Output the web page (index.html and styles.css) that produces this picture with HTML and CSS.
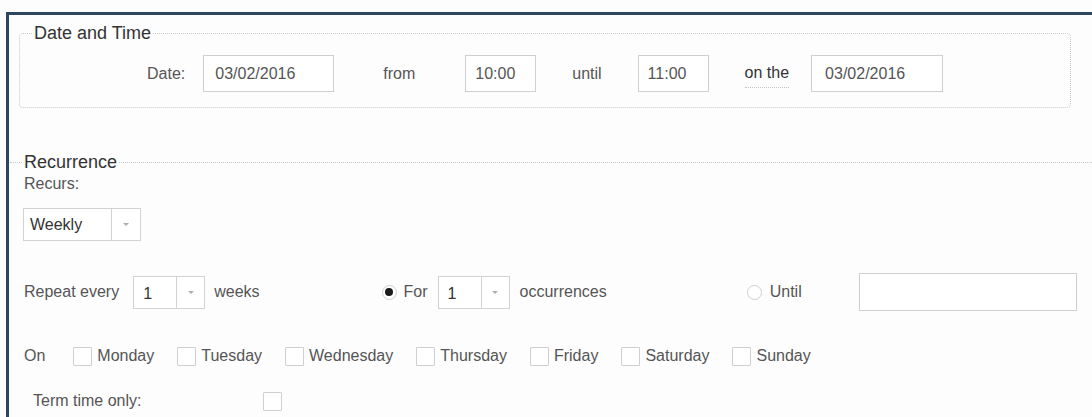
FILE: index.html
```html
<!DOCTYPE html>
<html lang="en">
<head>
<meta charset="utf-8">
<title>Event schedule</title>
<link rel="stylesheet" href="styles.css">
</head>
<body>
<div class="panel">
  <fieldset class="group">
    <legend>Date and Time</legend>
    <div class="date-row">
      <span class="lbl">Date:</span>
      <span class="field f-date ml-18">03/02/2016</span>
      <span class="lbl ml-49">from</span>
      <span class="field f-time ml-50">10:00</span>
      <span class="lbl ml-36">until</span>
      <span class="field f-time ml-36">11:00</span>
      <span class="lbl on-the ml-36">on the</span>
      <span class="field f-date2 ml-22">03/02/2016</span>
    </div>
  </fieldset>

  <fieldset class="recur">
    <legend>Recurrence</legend>
    <div class="recurs-label">Recurs:</div>
    <div class="select s-wide">
      <span class="select-text">Weekly</span>
      <span class="select-caret"><i class="caret"></i></span>
    </div>

    <div class="repeat-row">
      <span class="lbl">Repeat every</span>
      <div class="select s-num ml-14">
        <span class="select-text">1</span>
        <span class="select-caret"><i class="caret"></i></span>
      </div>
      <span class="lbl ml-9">weeks</span>
      <span class="radio on ml-122"></span>
      <span class="lbl ml-7">For</span>
      <div class="select s-num ml-10">
        <span class="select-text">1</span>
        <span class="select-caret"><i class="caret"></i></span>
      </div>
      <span class="lbl ml-10">occurrences</span>
      <span class="radio ml-140"></span>
      <span class="lbl ml-8">Until</span>
      <span class="field f-until ml-57"></span>
    </div>

    <div class="days-row">
      <span class="lbl on-lbl">On</span>
      <label class="day"><span class="box"></span>Monday</label>
      <label class="day"><span class="box"></span>Tuesday</label>
      <label class="day"><span class="box"></span>Wednesday</label>
      <label class="day"><span class="box"></span>Thursday</label>
      <label class="day"><span class="box"></span>Friday</label>
      <label class="day"><span class="box"></span>Saturday</label>
      <label class="day"><span class="box"></span>Sunday</label>
    </div>

    <div class="term-row">
      <span class="lbl term-lbl">Term time only:</span>
      <span class="box"></span>
    </div>
  </fieldset>
</div>
</body>
</html>
```

FILE: styles.css
```css
* {
  box-sizing: border-box;
}

html, body {
  height: 100%;
}

body {
  margin: 0;
  background: #fdfdfd;
  font-family: "Liberation Sans", Arial, sans-serif;
  font-size: 16px;
  line-height: 20px;
  color: #555;
  overflow: hidden;
}

.panel {
  margin: 12px 0 0 6px;
  border-top: 3px solid #2e4760;
  border-left: 3px solid #2e4760;
  min-height: calc(100% - 12px);
}

/* Date and Time box */
.group {
  margin: 8px 21px 0 10px;
  padding: 0 0 15px;
  border: 1px dotted #c9c9c9;
  border-radius: 4px;
  min-width: 0;
}

.group legend,
.recur legend {
  padding: 0 1px;
  font-size: 18px;
  line-height: 20px;
  color: #333;
}

.group legend {
  margin-left: 13px;
}

.date-row {
  display: flex;
  align-items: center;
  height: 37px;
  margin-top: 12px;
  padding-left: 127px;
}

.lbl {
  white-space: nowrap;
}

.on-the {
  color: #333;
  padding-bottom: 4px;
  margin-top: 4px;
  border-bottom: 1px dotted #c4c4c4;
}

.field {
  display: flex;
  align-items: center;
  height: 37px;
  padding-left: 11px;
  background: #fff;
  border: 1px solid #cfcfcf;
  color: #555;
}

.f-date { width: 131px; }
.f-date2 { width: 132px; padding-left: 13px; }
.f-time { width: 71px; padding-left: 9px; }
.f-until { width: 218px; height: 38px; }

/* Recurrence section */
.recur {
  margin: 44px 0 0 1px;
  padding: 0 0 0 13px;
  border: 0;
  border-top: 1px dotted #c9c9c9;
  min-width: 0;
}

.recur legend {
  margin-left: 0;
}

.recurs-label {
  margin-top: 2px;
  padding-left: 1px;
}

.select {
  display: flex;
  height: 33px;
  background: #fff;
  border: 1px solid #d2d2d2;
  color: #333;
}

.select-text {
  display: flex;
  align-items: center;
  padding-left: 6px;
}

.select-caret {
  display: flex;
  align-items: center;
  justify-content: center;
  border-left: 1px solid #d2d2d2;
}

.caret {
  width: 0;
  height: 0;
  border-left: 3px solid transparent;
  border-right: 3px solid transparent;
  border-top: 3px solid #b0b0b0;
}

.s-wide {
  width: 118px;
  margin-top: 14px;
}

.s-wide .select-text { width: 87px; }
.s-wide .select-caret { flex: 1; }

.s-num {
  width: 72px;
}

.s-num .select-text {
  width: 42px;
  padding-left: 9px;
  padding-top: 3px;
}

.s-num .select-caret { flex: 1; }

.repeat-row {
  display: flex;
  align-items: center;
  height: 38px;
  margin-top: 32px;
  padding-left: 1px;
}

.radio {
  width: 15px;
  height: 15px;
  border: 1px solid #cfcfcf;
  border-radius: 50%;
  background: #fff;
  display: flex;
  align-items: center;
  justify-content: center;
}

.radio.on::after {
  content: "";
  width: 8px;
  height: 8px;
  border-radius: 50%;
  background: #1a1a1a;
}

.days-row {
  display: flex;
  align-items: center;
  height: 20px;
  margin-top: 35px;
  padding-left: 1px;
  gap: 23px;
}

.on-lbl {
  margin-right: 5px;
}

.day {
  display: flex;
  align-items: center;
  gap: 5px;
}

.box {
  display: inline-block;
  width: 19px;
  height: 19px;
  background: #fff;
  border: 1px solid #cfcfcf;
  border-radius: 1px;
}

.term-row {
  display: flex;
  align-items: center;
  height: 20px;
  margin-top: 25px;
  padding-left: 10px;
}

.term-lbl {
  width: 230px;
}

/* spacing helpers for the inline form rows */
.ml-7 { margin-left: 7px; }
.ml-8 { margin-left: 8px; }
.ml-9 { margin-left: 9px; }
.ml-10 { margin-left: 10px; }
.ml-14 { margin-left: 14px; }
.ml-18 { margin-left: 18px; }
.ml-22 { margin-left: 22px; }
.ml-36 { margin-left: 36px; }
.ml-49 { margin-left: 49px; }
.ml-50 { margin-left: 50px; }
.ml-57 { margin-left: 57px; }
.ml-122 { margin-left: 122px; }
.ml-140 { margin-left: 140px; }
```
